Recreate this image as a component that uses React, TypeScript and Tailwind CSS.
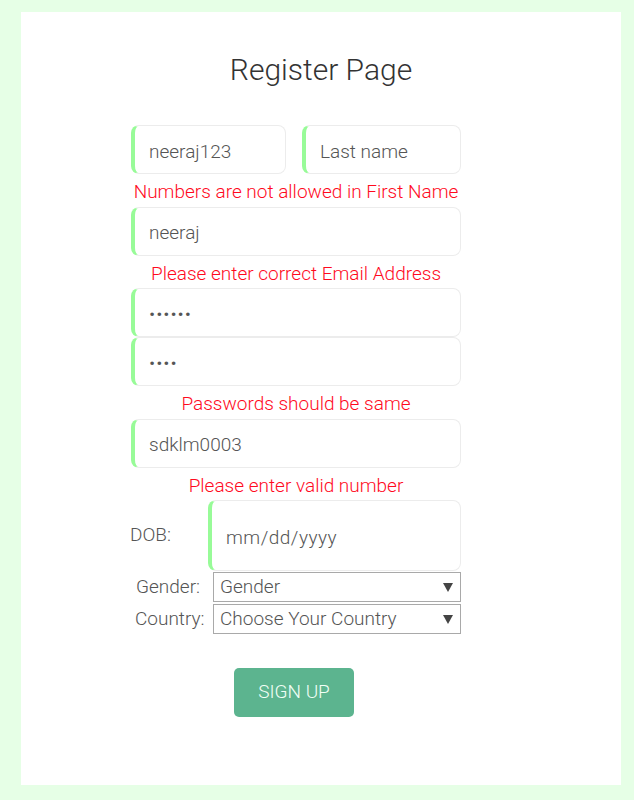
import React from "react";

const font = { fontFamily: "Roboto, 'Open Sans', sans-serif" };

// shared look of the text inputs
const field =
  "block h-[49px] w-full rounded-lg border border-[#ececec] border-l-4 border-l-[#98fb98] bg-white pl-[14px] pt-[3px] text-[19px] font-light text-[#555] outline-none placeholder:text-[#555]";

function Error({ children }: { children: React.ReactNode }) {
  return <p className="pt-[4px] text-center text-[19px] leading-[28.5px] font-light text-[#ff0a1e]">{children}</p>;
}

function Select({ label, placeholder, labelClass }: { label: string; placeholder: string; labelClass: string }) {
  return (
    <div className="flex items-center">
      <span className={"text-[19px] font-light text-[#555] " + labelClass}>{label}</span>
      <div className="relative ml-auto w-[248px]">
        <select
          defaultValue=""
          className="block h-[30px] w-full appearance-none rounded-none border border-[#a9a9a9] bg-white pl-[6px] text-[19px] font-light text-[#555] outline-none"
          style={font}
        >
          <option value="">{placeholder}</option>
        </select>
        <svg className="pointer-events-none absolute right-[8px] top-[11px]" width="10" height="9" viewBox="0 0 10 9">
          <path d="M0 0H10L5 9Z" fill="#444" />
        </svg>
      </div>
    </div>
  );
}

export default function App() {
  return (
    <div className="min-h-[800px] bg-[#e6ffe6] pt-[12px] pb-[15px]" style={font}>
      <div className="ml-[21px] h-[773px] w-[600px] bg-white pt-[40px]">
        <h1 className="text-center text-[30px] leading-[36px] font-light text-[#333]">Register Page</h1>

        <form className="ml-[110px] mt-[37px] w-[330px]" onSubmit={(e) => e.preventDefault()}>
          <div className="flex gap-4">
            <input className={field + " !w-[155px] shrink-0"} style={font} defaultValue="neeraj123" />
            <input className={field} style={font} placeholder="Last name" />
          </div>
          <Error>Numbers are not allowed in First Name</Error>
          <input className={field} style={font} defaultValue="neeraj" />
          <Error>Please enter correct Email Address</Error>
          <input className={field + " tracking-[1px]"} type="password" defaultValue="abcdef" />
          <input className={field + " tracking-[1px]"} type="password" defaultValue="abcd" />
          <Error>Passwords should be same</Error>
          <input className={field} style={font} defaultValue="sdklm0003" />
          <Error>Please enter valid number</Error>

          <div className="flex items-center">
            <span className="-ml-px text-[19px] font-light text-[#555]">DOB:</span>
            <input
              className={field + " ml-auto !h-[71px] !w-[253px] tracking-[0.5px]"}
              style={font}
              placeholder="mm/dd/yyyy"
            />
          </div>
          <div className="mt-px">
            <Select label="Gender:" placeholder="Gender" labelClass="ml-[5px]" />
          </div>
          <div className="mt-[2px]">
            <Select label="Country:" placeholder="Choose Your Country" labelClass="ml-[4px]" />
          </div>

          <button
            type="submit"
            className="ml-[103px] mt-[34px] h-[49px] w-[120px] rounded-[5px] bg-[#5cb48f] text-[19px] font-light text-[#f2fff6]"
            style={font}
          >
            SIGN UP
          </button>
        </form>
      </div>
    </div>
  );
}
